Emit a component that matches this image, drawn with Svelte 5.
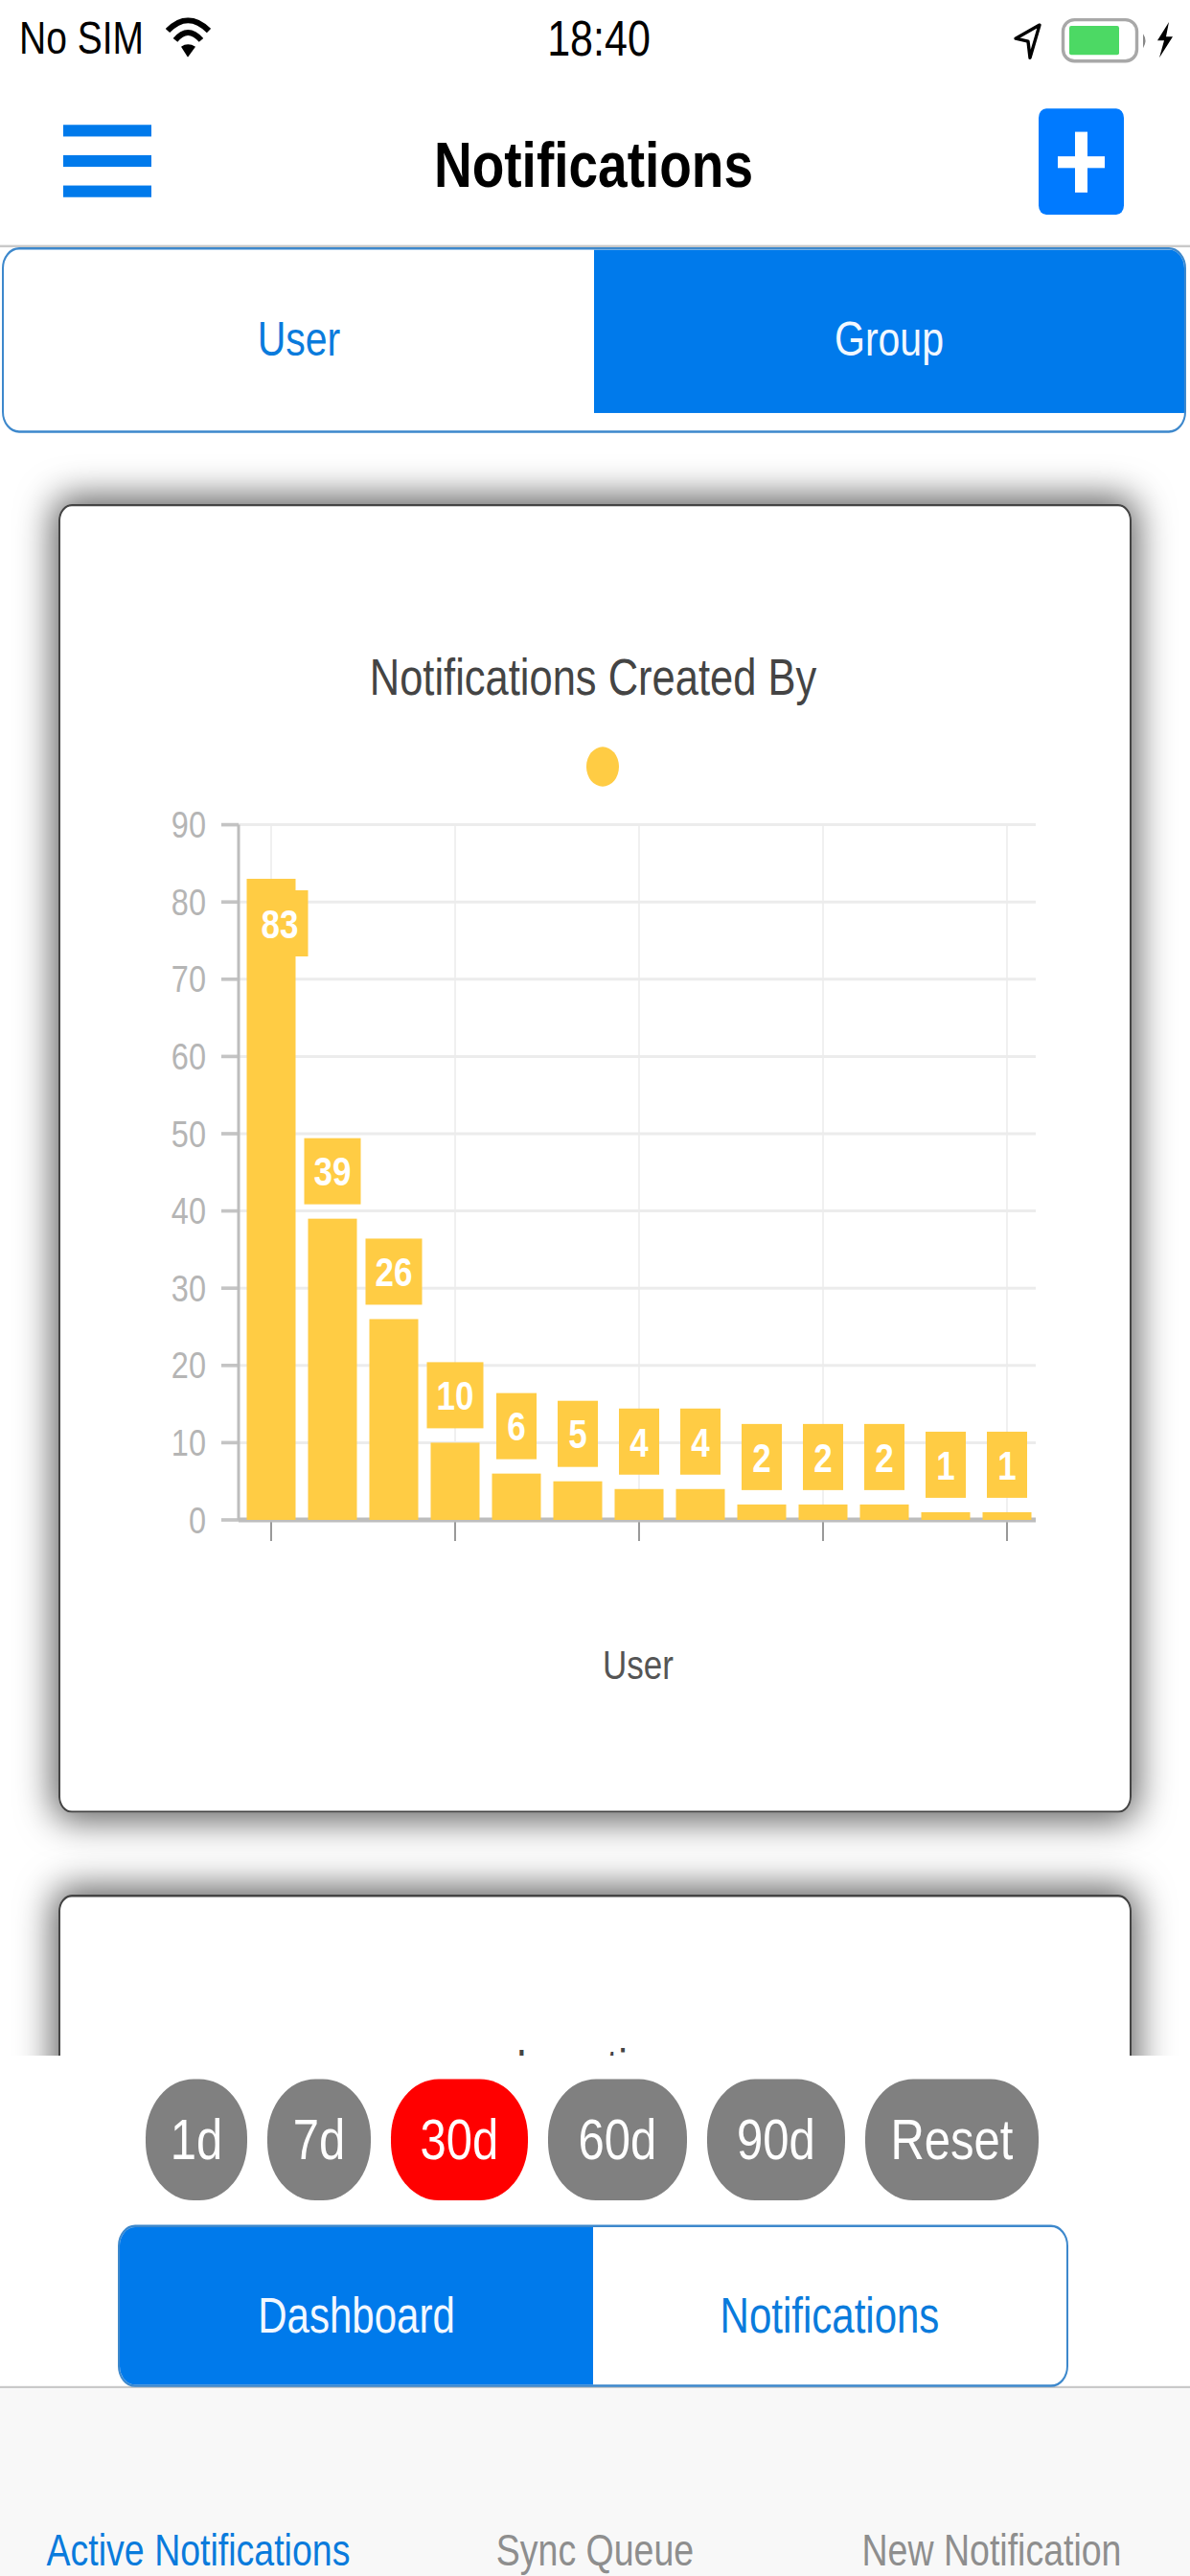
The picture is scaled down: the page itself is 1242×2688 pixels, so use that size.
<script lang="ts">
	// The screenshot is a 375x667 app stretched to 1242x2688, so the page is laid
	// out at 1242x2208 and stretched vertically by the same factor.
	const K = 1.2174;

	const values = [83, 39, 26, 10, 6, 5, 4, 4, 2, 2, 2, 1, 1];
	const ticks = [0, 10, 20, 30, 40, 50, 60, 70, 80, 90];

	// chart coordinates are page x and real y, divided by K when drawn
	const AXIS_X = 249;
	const RIGHT_X = 1081;
	const BASE_Y = 1586;
	const PER_UNIT = 8.06;
	const sy = (y: number): number => y / K;
	const valueY = (v: number): number => sy(BASE_Y - v * PER_UNIT);

	const bars = values.map((value, index) => {
		const cx = 283 + index * 64;
		const top = BASE_Y - value * PER_UNIT;
		const labelW = value >= 10 ? 59 : 42;
		// the tallest label does not fit above the bar and gets pushed inside
		const clamped = value === 83;
		return {
			value,
			cx,
			top,
			labelW,
			labelX: (clamped ? cx + 9 : cx) - labelW / 2,
			labelTop: clamped ? 929 : top - 84,
			textX: clamped ? cx + 9 : cx
		};
	});

	const gridX = [283, 475, 667, 859, 1051];

	const pills = [
		{ label: '1d' },
		{ label: '7d' },
		{ label: '30d', active: true },
		{ label: '60d' },
		{ label: '90d' },
		{ label: 'Reset' }
	];

	const tabs = [
		{ label: 'Active Notifications', active: true },
		{ label: 'Sync Queue' },
		{ label: 'New Notification' }
	];
</script>

<div class="screen">
	<div class="app">
		<header class="status">
			<div class="status-left">
				<span>No SIM</span>
				<svg class="wifi" viewBox="0 0 47 42" preserveAspectRatio="none" aria-hidden="true">
					<path d="M2 14 Q23 -8 45 14" fill="none" stroke="#000" stroke-width="6" />
					<path d="M10 24 Q23 8 37 24" fill="none" stroke="#000" stroke-width="6" />
					<path d="M16 31 Q23 26 31 31 L23 42 Z" fill="#000" />
				</svg>
			</div>
			<span class="time">18:40</span>
			<svg class="status-right" viewBox="1040 0 202 80" preserveAspectRatio="none" aria-hidden="true">
				<path d="M1085 26 L1060 40 L1073 43 L1075 60 Z" fill="none" stroke="#000" stroke-width="3.4" stroke-linejoin="round" />
				<rect x="1109.5" y="20.5" width="77" height="43" rx="12" fill="#fff" stroke="#a8a8a8" stroke-width="3.4" />
				<rect x="1116" y="27" width="52" height="30" rx="2" fill="#4cd964" />
				<path d="M1193 35 Q1198 42 1193 50 Z" fill="#888" />
				<path d="M1220 23 L1208 42 L1215 42 L1210 60 L1224 38 L1217 38 Z" fill="#000" />
			</svg>
		</header>

		<nav class="nav">
			<div class="burger" aria-hidden="true"><i></i><i></i><i></i></div>
			<h1>Notifications</h1>
			<div class="add" aria-hidden="true">
				<svg viewBox="0 0 89 91" preserveAspectRatio="none">
					<rect x="38" y="20" width="13" height="52" fill="#fff" />
					<rect x="20" y="41" width="49" height="10" fill="#fff" />
				</svg>
			</div>
		</nav>

		<main class="content">
			<div class="segment top-segment">
				<div class="cell">User</div>
				<div class="cell on">Group</div>
			</div>

			<section class="card first">
				<svg viewBox="61 432 1120 1122" aria-label="Notifications Created By chart">
					<text class="chart-title" x="619" y={sy(706)}>Notifications Created By</text>
					<circle cx="629" cy={sy(800)} r="17" fill="#ffcc44" />

					{#each gridX as x}
						<line class="grid-v" x1={x} x2={x} y1={valueY(90)} y2={sy(BASE_Y)} />
						<line class="tick" x1={x} x2={x} y1={sy(BASE_Y)} y2={sy(1608)} />
					{/each}

					{#each ticks as t}
						{#if t > 0}
							<line class="grid-h" x1={AXIS_X} x2={RIGHT_X} y1={valueY(t)} y2={valueY(t)} />
						{/if}
						<line class="tick-y" x1="231" x2={AXIS_X} y1={valueY(t)} y2={valueY(t)} />
						<text class="y-label" x="215" y={valueY(t)}>{t}</text>
					{/each}

					<line class="axis" x1={AXIS_X} x2={AXIS_X} y1={valueY(90)} y2={sy(BASE_Y)} />
					<line class="axis base" x1={AXIS_X} x2={RIGHT_X} y1={sy(BASE_Y)} y2={sy(BASE_Y)} />

					{#each bars as bar}
						<rect x={bar.cx - 25.5} y={sy(bar.top)} width="51" height={sy(BASE_Y - bar.top)} fill="#ffcc44" />
						<rect x={bar.labelX} y={sy(bar.labelTop)} width={bar.labelW} height={69 / K} fill="#ffcc44" />
						<text class="bar-label" x={bar.textX} y={sy(bar.labelTop + 35)}>{bar.value}</text>
					{/each}

					<text class="x-title" x="666" y={sy(1737)}>User</text>
				</svg>
			</section>

			<section class="card">
				<svg viewBox="61 432 1120 1122" aria-label="Location chart">
					<text class="chart-title" x="621" y={sy(706)}>Location</text>
				</svg>
			</section>
		</main>

		<div class="panel">
			<div class="pills">
				{#each pills as pill}
					<div class="pill" class:active={pill.active}>{pill.label}</div>
				{/each}
			</div>
			<div class="segment bottom-segment">
				<div class="cell on">Dashboard</div>
				<div class="cell">Notifications</div>
			</div>
		</div>

		<footer class="tabs">
			{#each tabs as tab}
				<div class="tab" class:active={tab.active}>{tab.label}</div>
			{/each}
		</footer>
	</div>
</div>

<style>
	:global(body) {
		margin: 0;
		background: #fff;
	}

	.screen {
		width: 1242px;
		height: 2688px;
		overflow: hidden;
	}

	.app {
		width: 1242px;
		height: 2208px;
		display: flex;
		flex-direction: column;
		overflow: hidden;
		background: #fff;
		color: #000;
		font-family: 'Liberation Sans', Arial, sans-serif;
		transform: scaleY(1.2174);
		transform-origin: top left;
	}

	.status {
		flex: none;
		height: 66px;
		display: grid;
		grid-template-columns: 1fr auto 1fr;
		align-items: center;
		font-size: 39px;
	}

	.status-left {
		display: flex;
		align-items: center;
		gap: 23px;
		padding-left: 20px;
	}

	.wifi {
		width: 47px;
		height: 34px;
		margin-top: -3px;
	}

	.time {
		font-size: 43px;
		padding-left: 8px;
	}

	.status-right {
		width: 202px;
		height: 66px;
		justify-self: end;
	}

	.nav {
		flex: none;
		height: 146px;
		box-sizing: border-box;
		display: grid;
		grid-template-columns: 1fr auto 1fr;
		align-items: center;
		padding: 0 69px 0 66px;
		border-bottom: 2px solid #c9c9c9;
	}

	.nav h1 {
		margin: 0;
		padding-top: 5px;
		font-size: 55px;
		font-weight: 700;
	}

	.burger {
		display: flex;
		flex-direction: column;
		gap: 16px;
		width: 92px;
	}

	.burger i {
		display: block;
		height: 10px;
		background: #007aeb;
	}

	.add {
		justify-self: end;
		width: 89px;
		height: 91px;
		border-radius: 8px;
		background: #007aff;
	}

	.add svg {
		display: block;
		width: 100%;
		height: 100%;
	}

	.content {
		flex: 1;
		min-height: 0;
		overflow: hidden;
	}

	.segment {
		display: flex;
		align-items: flex-start;
		box-sizing: border-box;
		border: 2px solid #3d88cc;
		border-radius: 18px;
		overflow: hidden;
		font-size: 42px;
		color: #0a7bdc;
	}

	.cell {
		flex: 1;
		display: flex;
		align-items: center;
		justify-content: center;
		box-sizing: border-box;
		height: 140px;
		padding-top: 14px;
	}

	.cell.on {
		background: #007aeb;
		color: #f2f8ff;
	}

	.top-segment {
		height: 159px;
		margin: 0 4px 0 2px;
		font-size: 41px;
	}

	.card {
		height: 1122px;
		margin: 61px 61px 0;
		border-radius: 14px;
		background: #fff;
		box-shadow:
			inset 0 0 0 2px #444,
			0 0 34px 6px rgba(0, 0, 0, 0.62);
	}

	.card + .card {
		margin-top: 70px;
	}

	.card svg {
		display: block;
		width: 100%;
		height: 100%;
	}

	.chart-title {
		font-size: 43.5px;
		fill: #444;
		text-anchor: middle;
		dominant-baseline: central;
	}

	.grid-v {
		stroke: #f0f0f0;
		stroke-width: 2;
	}

	.grid-h {
		stroke: #ececec;
		stroke-width: 2.5;
	}

	.tick {
		stroke: #999;
		stroke-width: 2;
	}

	.tick-y {
		stroke: #c4c4c4;
		stroke-width: 3;
	}

	.axis {
		stroke: #bdbdbd;
		stroke-width: 3;
	}

	.axis.base {
		stroke-width: 4;
	}

	.y-label {
		font-size: 32.5px;
		fill: #b5b5b5;
		text-anchor: end;
		dominant-baseline: central;
	}

	.bar-label {
		font-size: 35px;
		font-weight: 700;
		fill: #fff;
		text-anchor: middle;
		dominant-baseline: central;
	}

	.x-title {
		font-size: 35px;
		fill: #555;
		text-anchor: middle;
		dominant-baseline: central;
	}

	.panel {
		flex: none;
		position: relative;
		z-index: 1;
		height: 283px;
		box-sizing: border-box;
		padding-top: 20px;
		background: #fff;
	}

	.pills {
		display: grid;
		grid-template-columns: 106px 108px 143px 145px 144px 181px;
		gap: 21px;
		justify-content: center;
		padding-right: 6px;
	}

	.pill {
		height: 104px;
		display: flex;
		align-items: center;
		justify-content: center;
		border-radius: 50px;
		background: #808080;
		color: #fff;
		font-size: 49px;
	}

	.pill.active {
		background: #f00;
	}

	.bottom-segment {
		width: 992px;
		height: 139px;
		margin: 21px 0 0 123px;
	}

	.bottom-segment .cell {
		height: 139px;
		padding-top: 12px;
	}

	.tabs {
		flex: none;
		height: 163px;
		box-sizing: border-box;
		display: grid;
		grid-template-columns: repeat(3, 1fr);
		align-items: end;
		border-top: 2px solid #c9c9c9;
		background: #f8f8f8;
		font-size: 37.5px;
		color: #8e8e8e;
	}

	.tab {
		text-align: center;
		line-height: 44px;
	}

	.tab.active {
		color: #0a7bdc;
	}
</style>
